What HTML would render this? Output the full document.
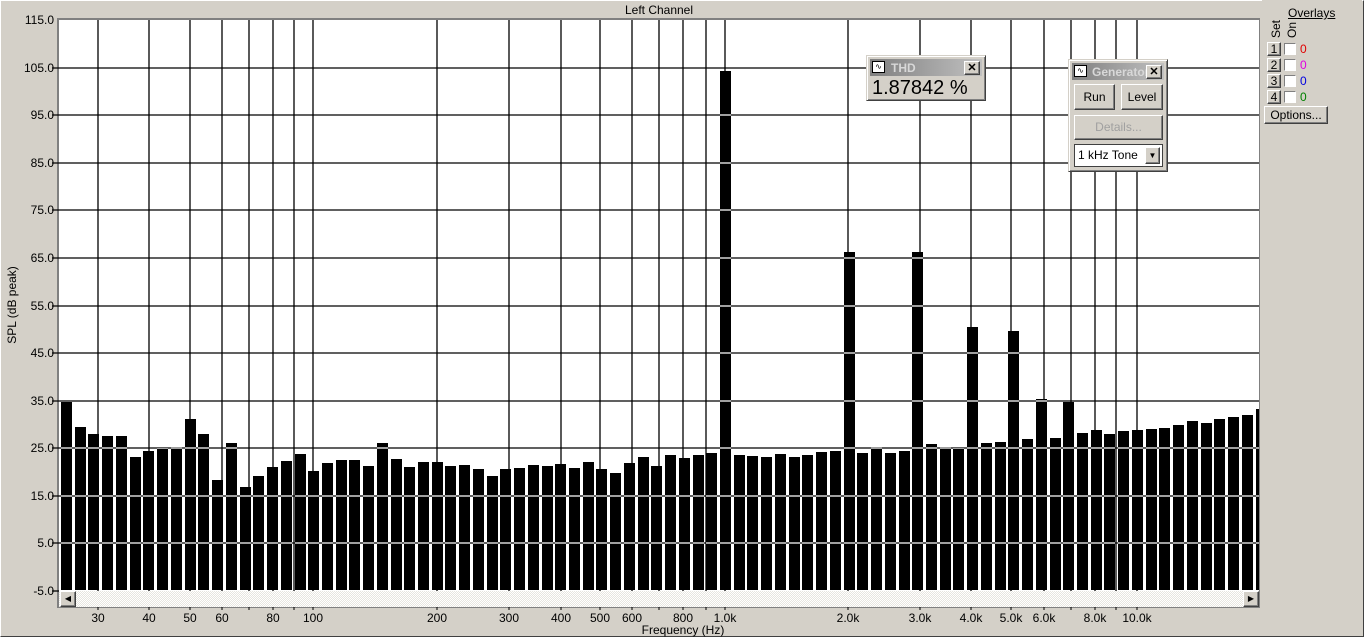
<!DOCTYPE html>
<html><head><style>
body{margin:0;width:1364px;height:637px;background:#d4d0c8;font-family:"Liberation Sans",sans-serif;font-size:12px;position:relative;overflow:hidden}
.a{position:absolute}
.btn{position:absolute;background:#d4d0c8;border:1px solid;border-color:#fff #404040 #404040 #fff;box-shadow:inset -1px -1px #808080;text-align:center;box-sizing:border-box;font-size:12px;color:#000}
.win{position:absolute;background:#d4d0c8;border:1px solid;border-color:#d4d0c8 #404040 #404040 #d4d0c8;box-shadow:inset 1px 1px #fff,inset -1px -1px #808080;box-sizing:border-box}
.tb{position:absolute;left:3px;right:3px;top:3px;height:17px;background:linear-gradient(90deg,#808080,#c0c0c0);color:#d8d8d8;font-weight:bold;font-size:12px;overflow:hidden}
.ic{position:absolute;left:2px;top:2px;width:13px;height:12px;background:#fff;border:1px solid #000;box-sizing:border-box;font-size:8px;line-height:10px;color:#000;text-align:center;font-weight:normal}
.x{position:absolute;right:2px;top:2px;width:16px;height:14px;font-size:11px;line-height:12px;font-weight:bold}
.cb{position:absolute;width:12px;height:12px;background:#fff;border:1px solid;border-color:#808080 #fff #fff #808080;box-sizing:border-box}
</style></head><body>
<div class="a" style="left:0;top:0;width:1362px;height:635px;border:1px solid #404040;border-top-color:#fff;border-left-color:#fff"></div>
<svg class="a" style="left:0;top:0" width="1364" height="637">
<defs>
<clipPath id="bc">
<rect x="61" y="402" width="11" height="188"/><rect x="75" y="427" width="11" height="163"/><rect x="88" y="434" width="11" height="156"/><rect x="102" y="436" width="11" height="154"/><rect x="116" y="436" width="11" height="154"/><rect x="130" y="457" width="11" height="133"/><rect x="143" y="451" width="11" height="139"/><rect x="157" y="448" width="11" height="142"/><rect x="171" y="447" width="11" height="143"/><rect x="185" y="419" width="11" height="171"/><rect x="198" y="434" width="11" height="156"/><rect x="212" y="480" width="11" height="110"/><rect x="226" y="443" width="11" height="147"/><rect x="240" y="487" width="11" height="103"/><rect x="253" y="476" width="11" height="114"/><rect x="267" y="467" width="11" height="123"/><rect x="281" y="461" width="11" height="129"/><rect x="295" y="454" width="11" height="136"/><rect x="308" y="471" width="11" height="119"/><rect x="322" y="463" width="11" height="127"/><rect x="336" y="460" width="11" height="130"/><rect x="349" y="460" width="11" height="130"/><rect x="363" y="466" width="11" height="124"/><rect x="377" y="443" width="11" height="147"/><rect x="391" y="459" width="11" height="131"/><rect x="404" y="467" width="11" height="123"/><rect x="418" y="462" width="11" height="128"/><rect x="432" y="462" width="11" height="128"/><rect x="445" y="466" width="11" height="124"/><rect x="459" y="465" width="11" height="125"/><rect x="473" y="469" width="11" height="121"/><rect x="487" y="476" width="11" height="114"/><rect x="500" y="469" width="11" height="121"/><rect x="514" y="468" width="11" height="122"/><rect x="528" y="465" width="11" height="125"/><rect x="542" y="466" width="11" height="124"/><rect x="555" y="464" width="11" height="126"/><rect x="569" y="468" width="11" height="122"/><rect x="583" y="462" width="11" height="128"/><rect x="596" y="469" width="11" height="121"/><rect x="610" y="473" width="11" height="117"/><rect x="624" y="463" width="11" height="127"/><rect x="638" y="457" width="11" height="133"/><rect x="651" y="466" width="11" height="124"/><rect x="665" y="455" width="11" height="135"/><rect x="679" y="458" width="11" height="132"/><rect x="693" y="455" width="11" height="135"/><rect x="706" y="453" width="11" height="137"/><rect x="720" y="71" width="11" height="519"/><rect x="734" y="455" width="11" height="135"/><rect x="747" y="456" width="11" height="134"/><rect x="761" y="457" width="11" height="133"/><rect x="775" y="454" width="11" height="136"/><rect x="789" y="457" width="11" height="133"/><rect x="802" y="455" width="11" height="135"/><rect x="816" y="452" width="11" height="138"/><rect x="830" y="451" width="11" height="139"/><rect x="844" y="252" width="11" height="338"/><rect x="857" y="453" width="11" height="137"/><rect x="871" y="447" width="11" height="143"/><rect x="885" y="453" width="11" height="137"/><rect x="899" y="451" width="11" height="139"/><rect x="912" y="252" width="11" height="338"/><rect x="926" y="444" width="11" height="146"/><rect x="940" y="447" width="11" height="143"/><rect x="953" y="448" width="11" height="142"/><rect x="967" y="327" width="11" height="263"/><rect x="981" y="443" width="11" height="147"/><rect x="995" y="442" width="11" height="148"/><rect x="1008" y="331" width="11" height="259"/><rect x="1022" y="439" width="11" height="151"/><rect x="1036" y="399" width="11" height="191"/><rect x="1050" y="438" width="11" height="152"/><rect x="1063" y="402" width="11" height="188"/><rect x="1077" y="433" width="11" height="157"/><rect x="1091" y="430" width="11" height="160"/><rect x="1104" y="434" width="11" height="156"/><rect x="1118" y="431" width="11" height="159"/><rect x="1132" y="430" width="11" height="160"/><rect x="1146" y="429" width="11" height="161"/><rect x="1159" y="428" width="11" height="162"/><rect x="1173" y="425" width="11" height="165"/><rect x="1187" y="421" width="11" height="169"/><rect x="1201" y="423" width="11" height="167"/><rect x="1214" y="419" width="11" height="171"/><rect x="1228" y="417" width="11" height="173"/><rect x="1242" y="415" width="11" height="175"/><rect x="1256" y="409" width="3" height="181"/>
</clipPath>
<pattern id="ck" width="2" height="2" patternUnits="userSpaceOnUse"><rect width="2" height="2" fill="#e8e6e0"/><rect width="1" height="1" fill="#fff"/><rect x="1" y="1" width="1" height="1" fill="#fff"/></pattern>
</defs>
<rect x="57" y="18" width="1203" height="590" fill="#808080"/>
<rect x="59" y="20" width="1200" height="571" fill="#fff"/>
<g stroke="#000" stroke-width="1.3">
<line x1="98" y1="20" x2="98" y2="591"/><line x1="149" y1="20" x2="149" y2="591"/><line x1="190" y1="20" x2="190" y2="591"/><line x1="222" y1="20" x2="222" y2="591"/><line x1="249" y1="20" x2="249" y2="591"/><line x1="273" y1="20" x2="273" y2="591"/><line x1="294" y1="20" x2="294" y2="591"/><line x1="313" y1="20" x2="313" y2="591"/><line x1="437" y1="20" x2="437" y2="591"/><line x1="509" y1="20" x2="509" y2="591"/><line x1="561" y1="20" x2="561" y2="591"/><line x1="600" y1="20" x2="600" y2="591"/><line x1="632" y1="20" x2="632" y2="591"/><line x1="659" y1="20" x2="659" y2="591"/><line x1="683" y1="20" x2="683" y2="591"/><line x1="706" y1="20" x2="706" y2="591"/><line x1="725" y1="20" x2="725" y2="591"/><line x1="848" y1="20" x2="848" y2="591"/><line x1="920" y1="20" x2="920" y2="591"/><line x1="971" y1="20" x2="971" y2="591"/><line x1="1011" y1="20" x2="1011" y2="591"/><line x1="1044" y1="20" x2="1044" y2="591"/><line x1="1071" y1="20" x2="1071" y2="591"/><line x1="1095" y1="20" x2="1095" y2="591"/><line x1="1116" y1="20" x2="1116" y2="591"/><line x1="1137" y1="20" x2="1137" y2="591"/>
</g>
<g id="hl" stroke="#000" stroke-width="1.3">
<line x1="52" x2="1259" y1="68" y2="68"/><line x1="52" x2="1259" y1="115" y2="115"/><line x1="52" x2="1259" y1="163" y2="163"/><line x1="52" x2="1259" y1="210" y2="210"/><line x1="52" x2="1259" y1="258" y2="258"/><line x1="52" x2="1259" y1="306" y2="306"/><line x1="52" x2="1259" y1="353" y2="353"/><line x1="52" x2="1259" y1="401" y2="401"/><line x1="52" x2="1259" y1="448" y2="448"/><line x1="52" x2="1259" y1="496" y2="496"/><line x1="52" x2="1259" y1="543" y2="543"/><line x1="52" x2="59" y1="591" y2="591"/>
</g>
<g clip-path="url(#bc)">
<rect x="59" y="20" width="1200" height="571" fill="#000"/>
<g stroke="#fff" stroke-width="1.3">
<line x1="59" x2="1259" y1="401" y2="401"/><line x1="59" x2="1259" y1="448" y2="448"/><line x1="59" x2="1259" y1="496" y2="496"/><line x1="59" x2="1259" y1="543" y2="543"/><line x1="59" x2="1259" y1="353" y2="353"/><line x1="59" x2="1259" y1="306" y2="306"/><line x1="59" x2="1259" y1="258" y2="258"/><line x1="59" x2="1259" y1="210" y2="210"/><line x1="59" x2="1259" y1="163" y2="163"/><line x1="59" x2="1259" y1="115" y2="115"/>
</g>
</g>
<rect x="59" y="591" width="1200" height="16" fill="url(#ck)"/>
<g font-size="12" fill="#000" text-anchor="end">
<text x="54" y="24">115.0</text><text x="54" y="72">105.0</text><text x="54" y="119">95.0</text><text x="54" y="167">85.0</text><text x="54" y="214">75.0</text><text x="54" y="262">65.0</text><text x="54" y="310">55.0</text><text x="54" y="357">45.0</text><text x="54" y="405">35.0</text><text x="54" y="452">25.0</text><text x="54" y="500">15.0</text><text x="54" y="547">5.0</text><text x="54" y="595">-5.0</text>
</g>
<g stroke="#000"><line x1="98" x2="98" y1="607" y2="610"/><line x1="149" x2="149" y1="607" y2="610"/><line x1="190" x2="190" y1="607" y2="610"/><line x1="222" x2="222" y1="607" y2="610"/><line x1="249" x2="249" y1="607" y2="610"/><line x1="273" x2="273" y1="607" y2="610"/><line x1="294" x2="294" y1="607" y2="610"/><line x1="313" x2="313" y1="607" y2="610"/><line x1="437" x2="437" y1="607" y2="610"/><line x1="509" x2="509" y1="607" y2="610"/><line x1="561" x2="561" y1="607" y2="610"/><line x1="600" x2="600" y1="607" y2="610"/><line x1="632" x2="632" y1="607" y2="610"/><line x1="659" x2="659" y1="607" y2="610"/><line x1="683" x2="683" y1="607" y2="610"/><line x1="706" x2="706" y1="607" y2="610"/><line x1="725" x2="725" y1="607" y2="610"/><line x1="848" x2="848" y1="607" y2="610"/><line x1="920" x2="920" y1="607" y2="610"/><line x1="971" x2="971" y1="607" y2="610"/><line x1="1011" x2="1011" y1="607" y2="610"/><line x1="1044" x2="1044" y1="607" y2="610"/><line x1="1071" x2="1071" y1="607" y2="610"/><line x1="1095" x2="1095" y1="607" y2="610"/><line x1="1116" x2="1116" y1="607" y2="610"/><line x1="1137" x2="1137" y1="607" y2="610"/></g>
<g font-size="12" fill="#000" text-anchor="middle">
<text x="98" y="622">30</text><text x="149" y="622">40</text><text x="190" y="622">50</text><text x="222" y="622">60</text><text x="273" y="622">80</text><text x="313" y="622">100</text><text x="437" y="622">200</text><text x="509" y="622">300</text><text x="561" y="622">400</text><text x="600" y="622">500</text><text x="632" y="622">600</text><text x="683" y="622">800</text><text x="725" y="622">1.0k</text><text x="848" y="622">2.0k</text><text x="920" y="622">3.0k</text><text x="971" y="622">4.0k</text><text x="1011" y="622">5.0k</text><text x="1044" y="622">6.0k</text><text x="1095" y="622">8.0k</text><text x="1137" y="622">10.0k</text>
<text x="683" y="634">Frequency (Hz)</text>
<text x="659" y="14">Left Channel</text>
<text transform="translate(16,305) rotate(-90)">SPL (dB peak)</text>
</g>
</svg>
<div class="btn" style="left:60px;top:591px;width:16px;height:16px;font-size:8px;line-height:14px">&#9664;</div>
<div class="btn" style="left:1243px;top:591px;width:16px;height:16px;font-size:8px;line-height:14px">&#9654;</div>

<div class="win" style="left:866px;top:55px;width:120px;height:46px">
<div class="tb"><div class="ic">&#8767;</div><span style="position:absolute;left:21px;top:2px">THD</span><div class="btn x">✕</div></div>
<div class="a" style="left:5px;top:21px;font-size:20px;color:#000">1.87842 %</div>
</div>

<div class="win" style="left:1068px;top:59px;width:100px;height:113px">
<div class="tb"><div class="ic">&#8767;</div><span style="position:absolute;left:20px;top:2px">Generator</span><div class="btn x">✕</div></div>
<div class="btn" style="left:5px;top:24px;width:41px;height:26px;line-height:24px">Run</div>
<div class="btn" style="left:52px;top:24px;width:42px;height:26px;line-height:24px">Level</div>
<div class="btn" style="left:5px;top:55px;width:89px;height:25px;line-height:23px;color:#a0a0a0">Details...</div>
<div class="a" style="left:5px;top:84px;width:89px;height:23px;background:#fff;border:1px solid #404040;box-sizing:border-box;line-height:21px;padding-left:3px">1 kHz Tone</div>
<div class="btn" style="left:76px;top:87px;width:15px;height:17px;font-size:8px;line-height:15px">&#9660;</div>
</div>

<div class="a" style="left:1262px;top:0;width:100px;height:635px;background:#d4d0c8"></div>
<div class="a" style="left:1288px;top:6px;text-decoration:underline">Overlays</div>
<div class="a" style="left:1269px;top:38px;transform:rotate(-90deg);transform-origin:0 0">Set</div>
<div class="a" style="left:1285px;top:38px;transform:rotate(-90deg);transform-origin:0 0">On</div>
<div class="btn" style="left:1267px;top:42px;width:14px;height:14px;line-height:12px">1</div><div class="cb" style="left:1284px;top:43px"></div><div class="a" style="left:1300px;top:42px;color:#e00000">0</div>
<div class="btn" style="left:1267px;top:58px;width:14px;height:14px;line-height:12px">2</div><div class="cb" style="left:1284px;top:59px"></div><div class="a" style="left:1300px;top:58px;color:#e000e0">0</div>
<div class="btn" style="left:1267px;top:74px;width:14px;height:14px;line-height:12px">3</div><div class="cb" style="left:1284px;top:75px"></div><div class="a" style="left:1300px;top:74px;color:#0000e0">0</div>
<div class="btn" style="left:1267px;top:90px;width:14px;height:14px;line-height:12px">4</div><div class="cb" style="left:1284px;top:91px"></div><div class="a" style="left:1300px;top:90px;color:#008000">0</div>
<div class="btn" style="left:1264px;top:106px;width:64px;height:18px;line-height:16px">Options...</div>
</body></html>
